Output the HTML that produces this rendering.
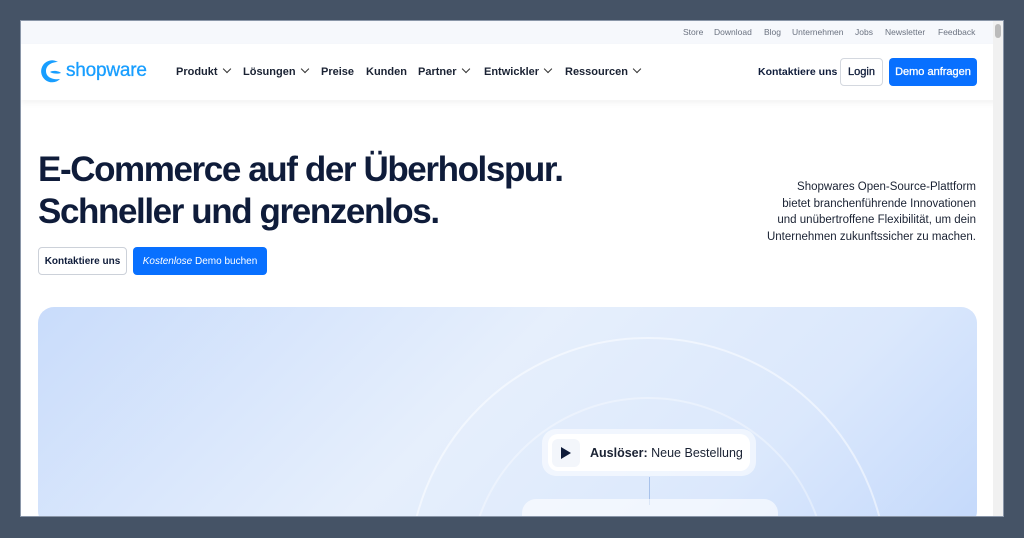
<!DOCTYPE html>
<html><head><style>
*{margin:0;padding:0;box-sizing:border-box}
html,body{overflow:hidden;width:1024px;height:538px}
body{background:#455366;position:relative;font-family:"Liberation Sans",sans-serif;color:#0f1c3a}
.win{position:absolute;left:20px;top:20px;width:984px;height:497px;background:#fff;overflow:hidden;border:1px solid #8a96a8}
.top{height:23px;background:#f6f8fc;font-size:8.5px;color:#6b7280;position:relative}
.top span{position:absolute;top:6px}
.nav{height:56px;box-shadow:0 3px 6px rgba(0,0,0,.05);position:relative}
.logo{position:absolute;left:17px;top:15px;display:flex;align-items:center;color:#189eff;font-size:19px;letter-spacing:-.2px;-webkit-text-stroke:.3px #189eff}
.menu span{position:absolute;top:22px;font-size:11px;font-weight:bold;color:#1a2233}
.menu span i{display:inline-block;width:6px;height:6px;border-right:1.3px solid #333;border-bottom:1.3px solid #333;transform:rotate(45deg);margin-left:6px;position:relative;top:-3px}
.kont{position:absolute;left:737px;top:22px;font-size:10.5px;font-weight:bold}
.login{position:absolute;left:819px;top:14px;width:43px;height:28px;border:1px solid #d4d8df;border-radius:4px;font-size:11px;display:flex;align-items:center;justify-content:center;-webkit-text-stroke:.3px #0f1c3a}
.demo{position:absolute;left:868px;top:14px;width:88px;height:28px;background:#0870ff;color:#fff;border-radius:4px;font-size:11px;display:flex;align-items:center;justify-content:center;-webkit-text-stroke:.3px #fff}
h1{position:absolute;left:17px;top:128px;font-size:35px;line-height:42px;letter-spacing:-1.4px;color:#0f1c3a}
.desc{position:absolute;right:27px;top:158px;text-align:right;font-size:11.5px;line-height:16.5px;color:#1a2233}
.b1{position:absolute;left:17px;top:226px;width:89px;height:28px;border:1px solid #ccd1d9;border-radius:4px;font-size:10px;font-weight:bold;display:flex;align-items:center;justify-content:center}
.b2{position:absolute;left:112px;top:226px;width:134px;height:28px;background:#0870ff;color:#fff;border-radius:4px;font-size:10px;display:flex;align-items:center;justify-content:center}
.card{position:absolute;left:17px;top:286px;width:939px;height:220px;border-radius:16px;background:linear-gradient(135deg,#c9dcfb 0%,#e6effc 45%,#dbe8fc 75%,#c4d9fb 100%);overflow:hidden}
.ring{position:absolute;border-radius:50%;border:2px solid rgba(255,255,255,.5)}
.pill{position:absolute;left:504px;top:122px;width:214px;height:47px;background:rgba(255,255,255,.55);border-radius:14px}
.pill .in{position:absolute;left:6px;top:5px;right:6px;bottom:5px;background:#fff;border-radius:10px;display:flex;align-items:center;font-size:12.5px;color:#1a2233}
.sb{position:absolute;right:0;top:0;width:10px;height:497px;background:#f1f1f1}
.sb div{position:absolute;left:2px;top:3px;width:6px;height:14px;background:#bbb;border-radius:3px}
</style></head><body>
<div class="win">
<div class="top"><span style="left:662px">Store</span><span style="left:693px">Download</span><span style="left:743px">Blog</span><span style="left:771px">Unternehmen</span><span style="left:834px">Jobs</span><span style="left:864px">Newsletter</span><span style="left:917px">Feedback</span></div>
<div class="nav">
<div class="logo"><svg width="26" height="24" viewBox="0 0 26 24"><path d="M20 3A11 11 0 1 0 22 20C16 21 8 19 8 12 8 6 14 3 20 3Z" fill="#189eff"/><path d="M12 13c3-2 9-1 11 1-3 1-8 1-11-1z" fill="#189eff"/></svg><span style="margin-left:2px">shopware</span></div>
<div class="menu"><span style="left:155px">Produkt<i></i></span><span style="left:222px">Lösungen<i></i></span><span style="left:300px">Preise</span><span style="left:345px">Kunden</span><span style="left:397px">Partner<i></i></span><span style="left:463px">Entwickler<i></i></span><span style="left:544px">Ressourcen<i></i></span></div>
<div class="kont">Kontaktiere uns</div>
<div class="login">Login</div>
<div class="demo">Demo anfragen</div>
</div>
<h1>E-Commerce auf der Überholspur.<br>Schneller und grenzenlos.</h1>
<div class="desc">Shopwares Open-Source-Plattform<br>bietet branchenführende Innovationen<br>und unübertroffene Flexibilität, um dein<br>Unternehmen zukunftssicher zu machen.</div>
<div class="b1">Kontaktiere uns</div>
<div class="b2"><i>Kostenlose</i>&nbsp;Demo buchen</div>
<div class="card">
<div class="ring" style="left:370px;top:30px;width:480px;height:480px"></div>
<div class="ring" style="left:430px;top:90px;width:360px;height:360px;border-color:rgba(255,255,255,.35)"></div>
<div class="pill"><div class="in"><span style="width:28px;height:28px;background:#f3f6fb;border-radius:6px;display:flex;align-items:center;justify-content:center;margin:0 10px 0 4px"><svg width="10" height="12"><path d="M0 0L10 6 0 12Z" fill="#0f1c3a"/></svg></span><b>Auslöser:</b>&nbsp;Neue Bestellung</div></div>
<div style="position:absolute;left:611px;top:170px;width:1px;height:28px;background:#a8c2ea"></div>
<div style="position:absolute;left:484px;top:192px;width:256px;height:40px;background:rgba(255,255,255,.6);border-radius:14px"></div>
</div>
<div class="sb"><div></div></div>
</div>
</body></html>
